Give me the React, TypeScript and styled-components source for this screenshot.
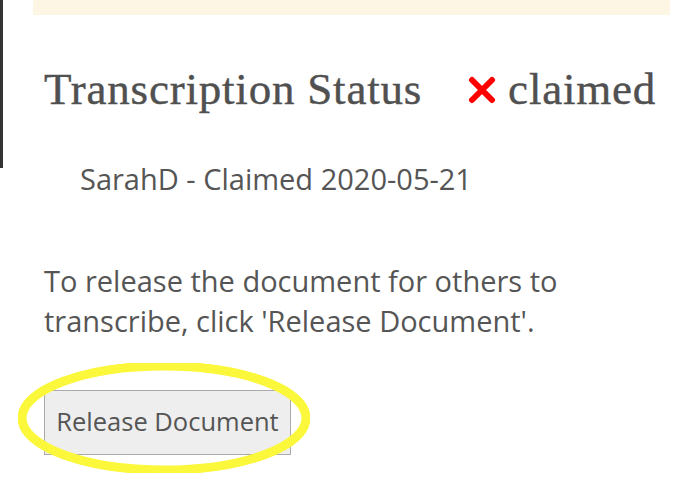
import React from 'react';
import styled, {createGlobalStyle} from 'styled-components';

const GlobalStyle = createGlobalStyle`
  html, body {
    margin: 0;
    padding: 0;
    background: #fff;
  }
`;

const Page = styled.div`
  position: relative;
  width: 684px;
  height: 492px;
  overflow: hidden;
  display: flex;
`;

const Rail = styled.div`
  width: 3px;
  height: 168px;
  background: #333;
  flex: none;
`;

const Content = styled.div`
  flex: 1;
  padding-left: 41px;
  padding-right: 14px;
  color: #555;
`;

const Notice = styled.div`
  height: 15px;
  margin-left: -11px;
  background: #fdf6e4;
`;

const StatusRow = styled.div`
  display: flex;
  align-items: baseline;
  margin-top: 49px;
  font-family: "Liberation Serif", "DejaVu Serif", serif;
  font-size: 45px;
  line-height: 50px;
  letter-spacing: 0.8px;
  color: #505050;
  -webkit-text-stroke: 0.4px #505050;
`;

const Title = styled.h2`
  margin: 0;
  font: inherit;
`;

const State = styled.span`
  display: flex;
  align-items: baseline;
  margin-left: 45px;
  gap: 11px;
`;

const Cross = styled.svg`
  width: 30px;
  height: 28px;
  align-self: center;
  position: relative;
  top: 1px;
`;

const Claimer = styled.div`
  margin-top: 47px;
  padding-left: 36px;
  font-family: "Open Sans", "Noto Sans", sans-serif;
  font-size: 29px;
  line-height: 36px;
  color: #555;
`;

const Note = styled.p`
  margin: 64px 0 0;
  font-family: "Open Sans", "Noto Sans", sans-serif;
  font-size: 29px;
  line-height: 40px;
  color: #555;
`;

const ButtonWrap = styled.div`
  position: relative;
  margin-top: 49px;
  width: 247px;
`;

const ReleaseButton = styled.button`
  display: block;
  width: 247px;
  height: 65px;
  border: 1px solid #aaa;
  background: #eee;
  font-family: "Open Sans", "Noto Sans", sans-serif;
  font-size: 25.5px;
  color: #555;
  padding: 0 0 4px;
`;

const Highlight = styled.svg`
  position: absolute;
  left: -26px;
  top: -27px;
  width: 292px;
  height: 110px;
  pointer-events: none;
`;

export default function App() {
  return (
    <Page>
      <GlobalStyle/>
      <Rail/>
      <Content>
        <Notice/>
        <StatusRow>
          <Title>Transcription Status</Title>
          <State>
            <Cross viewBox="0 0 30 28">
              <path d="M5 4 L25 24 M25 4 L5 24" stroke="#f00" strokeWidth="6" strokeLinecap="round"/>
            </Cross>
            claimed
          </State>
        </StatusRow>
        <Claimer>SarahD - Claimed 2020-05-21</Claimer>
        <Note>To release the document for others to transcribe, click 'Release Document'.</Note>
        <ButtonWrap>
          <ReleaseButton>Release Document</ReleaseButton>
          <Highlight viewBox="0 0 292 110">
            <ellipse cx="146" cy="55" rx="142" ry="52" fill="none" stroke="#fbf73a" strokeWidth="9"/>
          </Highlight>
        </ButtonWrap>
      </Content>
    </Page>
  );
}
